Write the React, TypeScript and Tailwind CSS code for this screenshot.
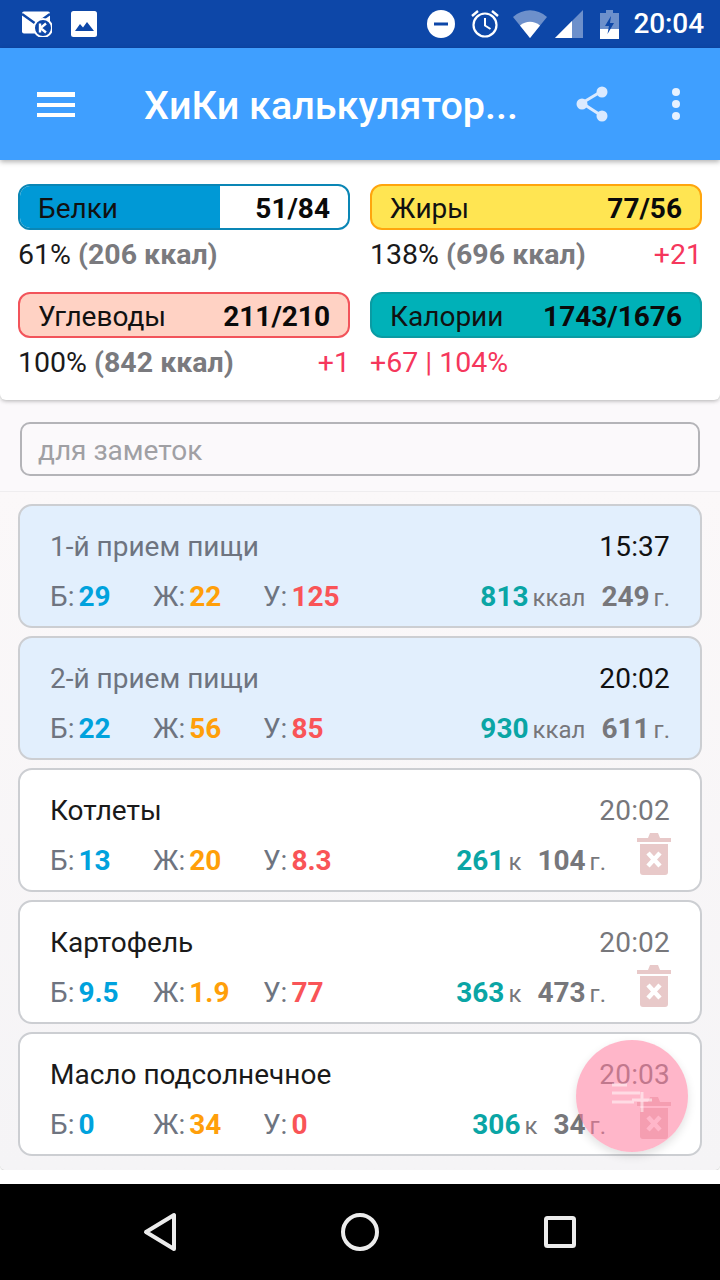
import React from 'react';

/* ── status bar icons ── */
const StatusLeft = () => (
  <div className="flex items-center gap-[19px] pl-[22px]">
    <svg width="30" height="26" viewBox="0 0 30 26">
      <rect x="0" y="0.500" width="28" height="22" rx="2" fill="#fff" />
      <path d="M0 3 L14 13 L28 3" fill="none" stroke="#0d47a8" strokeWidth="2.5" />
      <path d="M14 13 L14 18" fill="none" stroke="#0d47a8" strokeWidth="2" />
      <circle cx="21" cy="17" r="9" fill="#0d47a8" stroke="#fff" strokeWidth="2" />
      <path d="M18 12.500 V21.500 M24 12.500 L18.500 17 L24 21.500" fill="none" stroke="#fff" strokeWidth="2.4" />
    </svg>
    <svg width="26" height="26" viewBox="0 0 26 26">
      <rect width="26" height="26" rx="2.500" fill="#fff" />
      <path d="M4 20 L9 13 L12 16.500 L16 11 L23 20 Z" fill="#0d47a8" />
    </svg>
  </div>
);

const StatusRight = () => (
  <div className="flex items-center pr-[16px]">
    <svg width="28" height="28" viewBox="0 0 28 28" className="mr-[15px]">
      <circle cx="14" cy="14" r="14" fill="#fff" />
      <rect x="7" y="12.500" width="14" height="3" fill="#0d47a8" />
    </svg>
    <svg width="30" height="30" viewBox="0 0 30 30" className="mr-[13px]">
      <circle cx="15" cy="16" r="11.500" fill="none" stroke="#fff" strokeWidth="2.200" />
      <path d="M15 9 V16.500 L20.500 20" fill="none" stroke="#fff" strokeWidth="2" />
      <path d="M2 7 L8 2 M28 7 L22 2" fill="none" stroke="#fff" strokeWidth="2.400" />
    </svg>
    <svg width="34" height="28" viewBox="0 0 34 28" className="mr-[8px]">
      <path d="M0 7 C10 -2 24 -2 34 7 L17 28 Z" fill="#fff" fillOpacity="0.4" />
      <path d="M7 15.500 C13 10.500 21 10.500 27 15.500 L17 28 Z" fill="#fff" />
    </svg>
    <svg width="28" height="28" viewBox="0 0 28 28" className="mr-[17px]">
      <path d="M28 0 V28 H0 Z" fill="#fff" fillOpacity="0.4" />
      <path d="M17 11 V28 H0 Z" fill="#fff" />
    </svg>
    <svg width="19" height="29" viewBox="0 0 19 29" className="mr-[14px]">
      <path d="M6 0 H13 V3 H19 V29 H0 V3 H6 Z" fill="#fff" fillOpacity="0.4" />
      <path d="M0 19 H19 V29 H0 Z" fill="#fff" />
      <path d="M11 6 L5 16 H9 L7.500 24 L14 13 H10 Z" fill="#0d47a8" />
    </svg>
    <span className="text-[28px] leading-none font-medium text-white tracking-[-0.1px]">20:04</span>
  </div>
);

/* ── app bar ── */
const AppBar = () => (
  <div className="relative z-20 h-[112px] shrink-0 bg-[#3f9fff] flex items-center shadow-[0_2px_5px_rgba(0,0,0,0.3)]">
    <div className="ml-[37px] w-[38px] flex flex-col gap-[6px]">
      <div className="h-[5px] bg-white" />
      <div className="h-[4px] bg-white" />
      <div className="h-[4px] bg-white" />
    </div>
    <h1 className="ml-[69px] pt-[4px] text-[39.500px] leading-none font-medium text-white">ХиКи калькулятор...</h1>
    <svg width="34" height="36" viewBox="0 0 34 36" className="absolute left-[575px] top-[38px]">
      <path d="M27 5 L7 17 L27 30" fill="none" stroke="#dbeaff" strokeWidth="3" />
      <circle cx="27" cy="6" r="5.500" fill="#dbeaff" />
      <circle cx="7" cy="18" r="5.500" fill="#dbeaff" />
      <circle cx="27" cy="30" r="5.500" fill="#dbeaff" />
    </svg>
    <svg width="10" height="36" viewBox="0 0 10 36" className="absolute left-[671px] top-[38px]">
      <circle cx="5" cy="6" r="4" fill="#e6f1ff" />
      <circle cx="5" cy="18" r="4" fill="#e6f1ff" />
      <circle cx="5" cy="30" r="4" fill="#e6f1ff" />
    </svg>
  </div>
);

/* ── macro summary ── */
interface MacroProps {
  name: string;
  value: string;
  bar: string;
  fill?: string;
  percent: string;
  kcal?: string;
  over?: string;
}

const Macro: React.FC<MacroProps> = ({ name, value, bar, fill, percent, kcal, over }) => (
  <div className="w-[332px]">
    <div className={`relative h-[46px] rounded-[12px] border-2 overflow-hidden flex items-center justify-between pl-[18px] pr-[18px] pt-[4px] ${bar}`}>
      {fill && <div className={`absolute left-0 top-0 bottom-0 ${fill}`} />}
      <span className="relative text-[28px] leading-none text-[#111]">{name}</span>
      <span className="relative text-[28px] leading-none font-bold text-[#0a0a0a]">{value}</span>
    </div>
    <div className="mt-[8px] h-[34px] flex items-center justify-between text-[28.500px] leading-none">
      <span className={kcal ? 'text-[#1a1a1a]' : 'text-[#f5375c]'}>
        {percent}
        {kcal && <span className="font-bold text-[#7a7a7e]"> ({kcal})</span>}
      </span>
      {over && <span className="text-[#f5375c]">{over}</span>}
    </div>
  </div>
);

const Summary = () => (
  <div className="relative z-10 h-[240px] shrink-0 bg-white rounded-b-[6px] shadow-[0_1px_4px_rgba(0,0,0,0.3)] pt-[24px] px-[18px]">
    <div className="grid grid-cols-[332px_332px] gap-x-[20px] gap-y-[20px]">
      <Macro name="Белки" value="51/84" bar="border-[#0a86b5] bg-white" fill="w-[200px] bg-[#0099d6]" percent="61%" kcal="206 ккал" />
      <Macro name="Жиры" value="77/56" bar="border-[#ffa50d] bg-[#ffe552]" percent="138%" kcal="696 ккал" over="+21" />
      <Macro name="Углеводы" value="211/210" bar="border-[#f2545b] bg-[#ffd2c4]" percent="100%" kcal="842 ккал" over="+1" />
      <Macro name="Калории" value="1743/1676" bar="border-[#0a9ba3] bg-[#00b1b8]" percent="+67 | 104%" />
    </div>
  </div>
);

/* ── list cards ── */
const Stat: React.FC<{ label: string; value: string; color: string; width: string }> = ({ label, value, color, width }) => (
  <div className={`${width} flex items-baseline`}>
    <span className="text-[#6e7480]">{label}</span>
    <span className={`ml-[4px] font-bold ${color}`}>{value}</span>
  </div>
);

interface CardProps {
  title: string;
  time: string;
  b: string;
  z: string;
  u: string;
  kcal: string;
  grams: string;
  food?: boolean;
}

const Trash = () => (
  <svg width="34" height="44" viewBox="0 0 34 44" className="absolute right-[29px] top-[62px]">
    <path d="M0 6 H34 V10 H0 Z M11 6 L13 1 H21 L23 6 Z" fill="#e8c9c9" />
    <path d="M3 12 H31 V40 Q31 43 28 43 H6 Q3 43 3 40 Z" fill="#e8c9c9" />
    <path d="M11 21 L23 34 M23 21 L11 34" stroke="#fff" strokeWidth="4.500" />
  </svg>
);

const Card: React.FC<CardProps> = ({ title, time, b, z, u, kcal, grams, food }) => (
  <div className={`relative h-[124px] rounded-[14px] border-2 border-[#ccced2] pl-[30px] pt-[23px] pr-[30px] ${food ? 'bg-white' : 'bg-[#e2effd]'}`}>
    <div className="h-[36px] flex items-center justify-between text-[28px] leading-none">
      <span className={food ? 'text-[#1a1a1a]' : 'text-[#6e7480]'}>{title}</span>
      <span className={`tracking-[0.2px] ${food ? 'text-[#77777b]' : 'text-[#111]'}`}>{time}</span>
    </div>
    <div className="mt-[14px] flex items-baseline text-[28px] leading-[36px]">
      <Stat label="Б:" value={b} color="text-[#00a2dd]" width="w-[103px]" />
      <Stat label="Ж:" value={z} color="text-[#ff9f0a]" width="w-[110px]" />
      <Stat label="У:" value={u} color="text-[#f95457]" width="w-[100px]" />
      <div className={`ml-auto flex items-baseline ${food ? 'mr-[64px]' : ''}`}>
        <span className="font-bold text-[#0aa5a5]">{kcal}</span>
        <span className="ml-[4px] text-[24px] text-[#77777b]">{food ? 'к' : 'ккал'}</span>
        <span className="ml-[16px] font-bold text-[#77777b]">{grams}</span>
        <span className="ml-[4px] text-[24px] text-[#77777b]">г.</span>
      </div>
    </div>
    {food && <Trash />}
  </div>
);

const AddButton = () => (
  <div className="absolute left-[576px] top-[1040px] z-30 w-[112px] h-[112px] rounded-full bg-[#ff7a9c]/55 shadow-[0_4px_10px_rgba(0,0,0,0.12)]">
    <svg width="42" height="32" viewBox="0 0 42 32" className="absolute left-[36px] top-[42px]">
      <path d="M0 3 H15 M0 11 H28 M0 20 H22 M30 10 V30 M20 18 H40" fill="none" stroke="#fff" strokeOpacity="0.5" strokeWidth="3" />
    </svg>
  </div>
);

/* ── navigation bar ── */
const NavBar = () => (
  <div className="h-[96px] shrink-0 bg-black flex items-center justify-center">
    <svg width="480" height="42" viewBox="0 0 480 42" fill="none" stroke="#ececec" strokeWidth="4" strokeLinejoin="round">
      <path d="M26 21 L54 4 V38 Z" />
      <circle cx="240" cy="21" r="17" />
      <rect x="426" y="7" width="28" height="28" rx="1.500" />
    </svg>
  </div>
);

export default function App() {
  return (
    <div className="relative w-[720px] h-[1280px] overflow-hidden flex flex-col bg-white font-['Roboto',sans-serif]">
      <div className="h-[48px] shrink-0 bg-[#0d47a8] flex items-center justify-between">
        <StatusLeft />
        <StatusRight />
      </div>
      <AppBar />
      <Summary />
      <div className="h-[92px] shrink-0 bg-[#fbf9fb] px-[20px] pt-[22px] border-b border-[#f1eff1]">
        <div className="h-[54px] rounded-[10px] border-2 border-[#b4b4b8] flex items-center pl-[16px] pt-[4px] text-[28px] text-[#a0a0a4]">
          для заметок
        </div>
      </div>
      <div className="h-[678px] shrink-0 bg-gradient-to-b from-[#fbf8f9] to-[#f5f4f6] rounded-b-[6px] shadow-[0_1px_2px_rgba(0,0,0,0.2)] px-[18px] pt-[12px] flex flex-col gap-[8px]">
        <Card title="1-й прием пищи" time="15:37" b="29" z="22" u="125" kcal="813" grams="249" />
        <Card title="2-й прием пищи" time="20:02" b="22" z="56" u="85" kcal="930" grams="611" />
        <Card title="Котлеты" time="20:02" b="13" z="20" u="8.3" kcal="261" grams="104" food />
        <Card title="Картофель" time="20:02" b="9.5" z="1.9" u="77" kcal="363" grams="473" food />
        <Card title="Масло подсолнечное" time="20:03" b="0" z="34" u="0" kcal="306" grams="34" food />
      </div>
      <div className="flex-1 bg-white" />
      <NavBar />
      <AddButton />
    </div>
  );
}
